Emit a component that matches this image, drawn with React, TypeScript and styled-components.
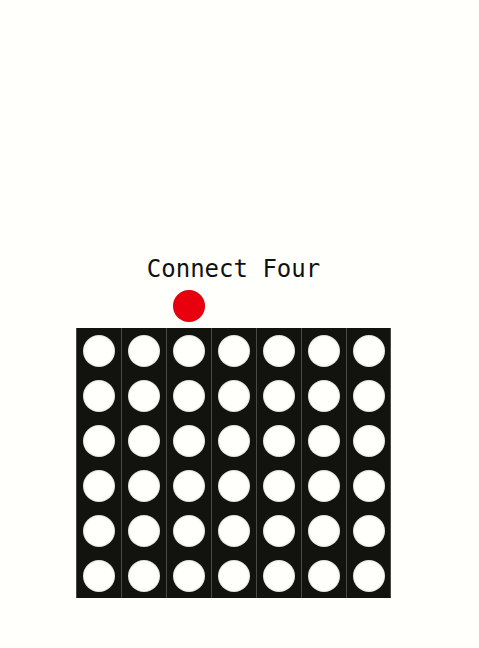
import React from 'react'
import styled, { createGlobalStyle } from 'styled-components'

const GlobalStyle = createGlobalStyle`
  html, body {
    margin: 0;
    padding: 0;
    background: #fffffc;
  }
`

const Page = styled.div`
  min-height: 648px;
  padding: 255px 0 0 76px;
  box-sizing: border-box;
  font-family: 'DejaVu Sans Mono', monospace;
`

const Game = styled.div`
  width: 315px;
  display: flex;
  flex-flow: column nowrap;
  align-items: center;
`

const Title = styled.h1`
  margin: 0;
  font-size: 24px;
  font-weight: normal;
  line-height: 28px;
  color: #111;
  text-align: center;
`

const DropRow = styled.div`
  width: 100%;
  height: 45px;
  display: grid;
  grid-template-columns: repeat(7, 45px);
`

const Slot = styled.div`
  display: flex;
  justify-content: center;
  align-items: center;
`

const Piece = styled.div<{ $color: string }>`
  width: 32px;
  height: 32px;
  border-radius: 50%;
  background: ${(p) => p.$color};
  box-shadow: inset 0 0 1px rgba(0, 0, 0, 0.25);
`

const Board = styled.div`
  width: 315px;
  display: flex;
  flex-flow: row nowrap;
  background: #12120e;
`

const Column = styled.div`
  width: 45px;
  box-sizing: border-box;
  border-left: 1px solid #4a4a45;
  &:last-child {
    border-right: 1px solid #4a4a45;
  }
  display: flex;
  flex-flow: column nowrap;
`

const Cell = styled.div`
  height: 45px;
  display: flex;
  justify-content: center;
  align-items: center;
`

const Hole = styled.div`
  width: 32px;
  height: 32px;
  border-radius: 50%;
  background: #fffffc;
  box-shadow: inset 0 0 2px rgba(0, 0, 0, 0.35);
`

const COLS = 7
const ROWS = 6
const activeCol = 2

const App = () => {
  return (
    <Page>
      <GlobalStyle />
      <Game>
        <Title>Connect Four</Title>
        <DropRow>
          {Array.from({ length: COLS }).map((_, i) => (
            <Slot key={i}>{i === activeCol && <Piece $color="#e8000f" />}</Slot>
          ))}
        </DropRow>
        <Board>
          {Array.from({ length: COLS }).map((_, c) => (
            <Column key={c}>
              {Array.from({ length: ROWS }).map((_, r) => (
                <Cell key={r}>
                  <Hole />
                </Cell>
              ))}
            </Column>
          ))}
        </Board>
      </Game>
    </Page>
  )
}

export default App
